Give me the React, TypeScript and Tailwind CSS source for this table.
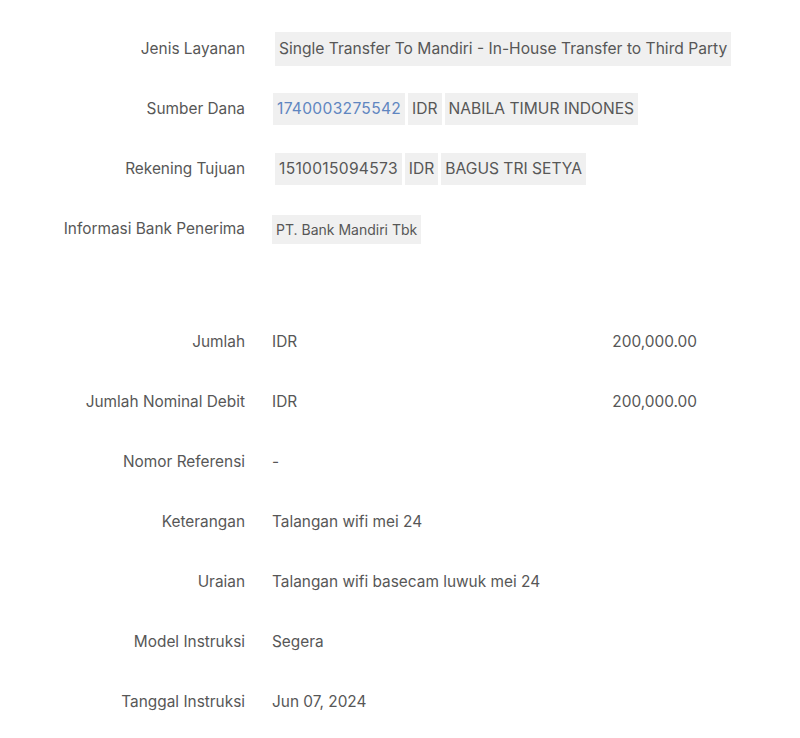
import React from "react";

const font = { fontFamily: "Inter, 'Noto Sans', sans-serif" };

function Row({ label, children }: { label: string; children: React.ReactNode }) {
  return (
    <div className="flex h-[60px] items-center">
      <div className="w-[245px] shrink-0 text-right text-[15.4px] text-[#575757]">{label}</div>
      <div className="ml-[27px] flex items-center">{children}</div>
    </div>
  );
}

function Chip({ children, className = "" }: { children: React.ReactNode; className?: string }) {
  return (
    <span className={"flex items-center bg-[#f0f0f0] px-[4px] text-[#575757] " + className}>
      {children}
    </span>
  );
}

export default function App() {
  return (
    <div className="min-h-[738px] w-[800px] bg-white pt-[19px]" style={font}>
      <Row label="Jenis Layanan">
        <Chip className="ml-[3px] h-[34px] text-[15.6px]">Single Transfer To Mandiri - In-House Transfer to Third Party</Chip>
      </Row>
      <Row label="Sumber Dana">
        <div className="ml-[1px] flex gap-[3px]">
          <Chip className="h-[32px] text-[15.6px] tracking-[0.3px]">
            <span className="text-[#5f86c0]">1740003275542</span>
          </Chip>
          <Chip className="h-[32px] text-[15.6px]">IDR</Chip>
          <Chip className="h-[32px] text-[15.6px]">NABILA TIMUR INDONES</Chip>
        </div>
      </Row>
      <Row label="Rekening Tujuan">
        <div className="ml-[3px] flex gap-[3px]">
          <Chip className="h-[32px] text-[15.6px] tracking-[0.3px]">1510015094573</Chip>
          <Chip className="h-[32px] text-[15.6px]">IDR</Chip>
          <Chip className="h-[32px] text-[15.6px]">BAGUS TRI SETYA</Chip>
        </div>
      </Row>
      <Row label="Informasi Bank Penerima">
        <Chip className="h-[29px] text-[14px]">PT. Bank Mandiri Tbk</Chip>
      </Row>

      <div className="h-[53px]" />

      <Row label="Jumlah">
        <div className="flex w-[425px] justify-between text-[15.4px] text-[#575757]">
          <span>IDR</span>
          <span>200,000.00</span>
        </div>
      </Row>
      <Row label="Jumlah Nominal Debit">
        <div className="flex w-[425px] justify-between text-[15.4px] text-[#575757]">
          <span>IDR</span>
          <span>200,000.00</span>
        </div>
      </Row>
      <Row label="Nomor Referensi">
        <span className="text-[15.4px] text-[#575757]">-</span>
      </Row>
      <Row label="Keterangan">
        <span className="text-[15.4px] text-[#575757]">Talangan wifi mei 24</span>
      </Row>
      <Row label="Uraian">
        <span className="text-[15.4px] text-[#575757]">Talangan wifi basecam luwuk mei 24</span>
      </Row>
      <Row label="Model Instruksi">
        <span className="text-[15.4px] text-[#575757]">Segera</span>
      </Row>
      <Row label="Tanggal Instruksi">
        <span className="text-[15.4px] text-[#575757]">Jun 07, 2024</span>
      </Row>
    </div>
  );
}
